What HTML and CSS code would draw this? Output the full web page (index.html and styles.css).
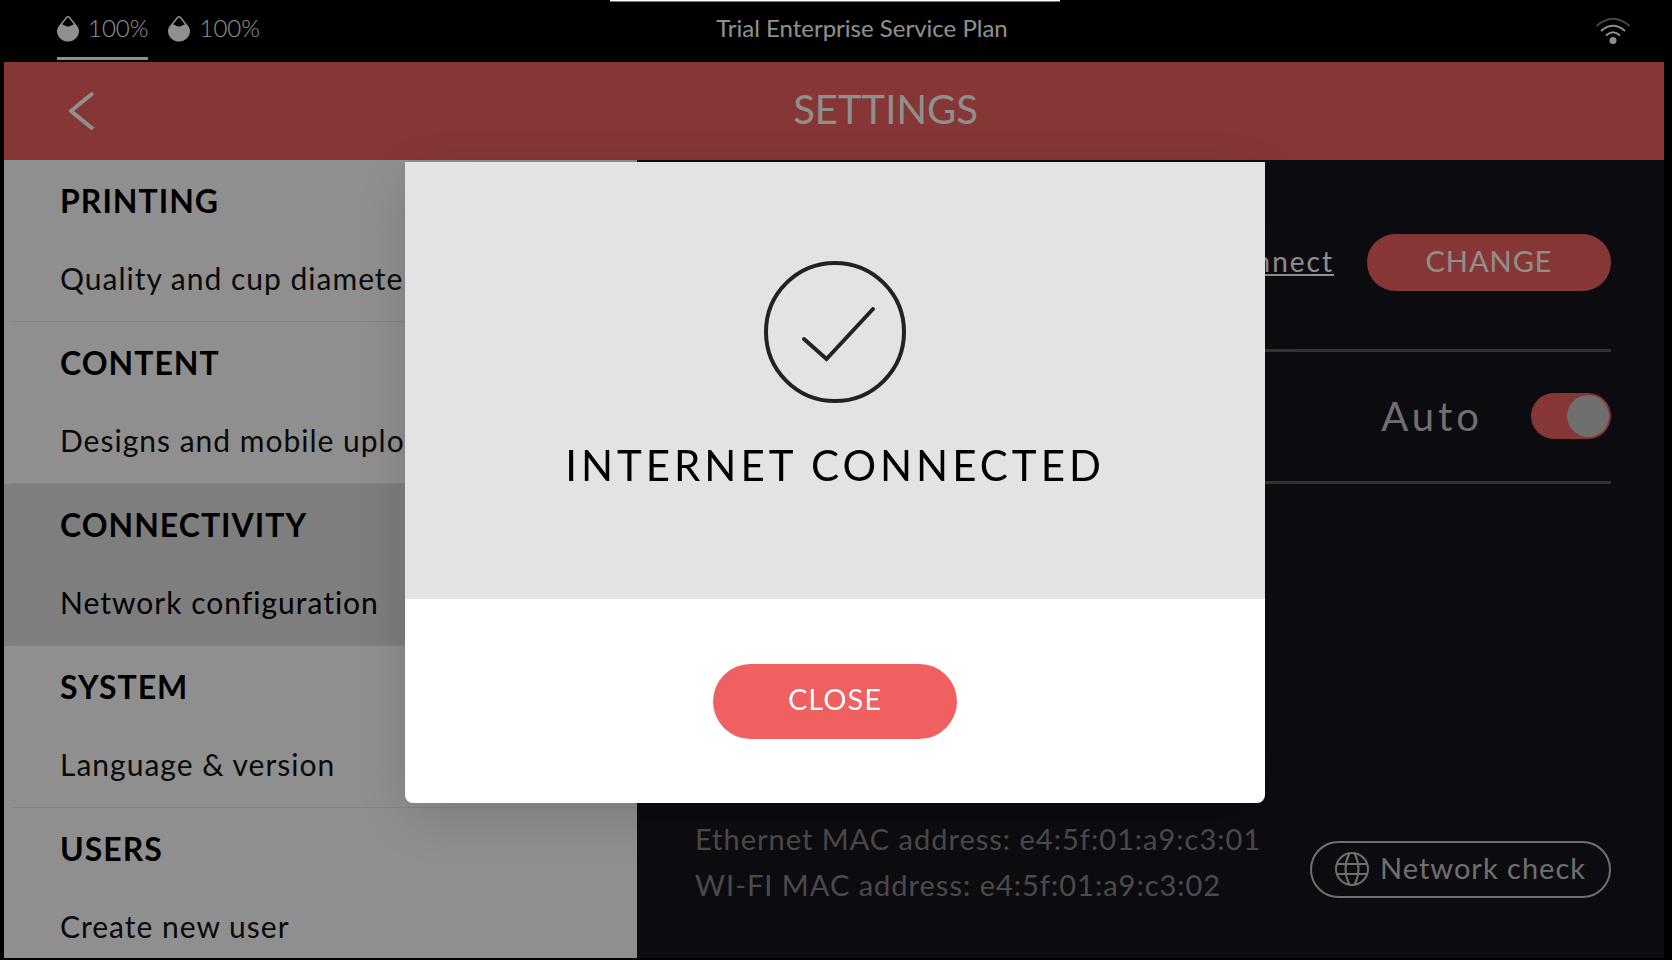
FILE: index.html
```html
<!DOCTYPE html>
<html lang="en">
<head>
  <meta charset="UTF-8" />
  <meta name="viewport" content="width=device-width, initial-scale=1.0" />
  <title>Settings</title>
  <link rel="stylesheet" href="styles.css">
</head>
<body>
  <div class="screen">
    <div class="status">
      <div class="inks">
        <div class="ink selected">
          <svg width="22" height="27" viewBox="0 0 22 27">
            <path d="M4 9.500 L9.500 2.500 Q11 1 12.500 2.500 L18 9.500" fill="none" stroke="#fff" stroke-width="1.500"/>
            <path d="M3.500 9 C6 8.500 8 11.500 11 11.500 S16 8.500 18.500 9 C21 11.500 22 13.500 22 16 a11 10.500 0 0 1 -22 0 C0 13.500 1 11.500 3.500 9z" fill="#fff"/>
          </svg>
          <span>100%</span>
        </div>
        <div class="ink">
          <svg width="22" height="27" viewBox="0 0 22 27">
            <path d="M4 9.500 L9.500 2.500 Q11 1 12.500 2.500 L18 9.500" fill="none" stroke="#fff" stroke-width="1.500"/>
            <path d="M3.500 9 C6 8.500 8 11.500 11 11.500 S16 8.500 18.500 9 C21 11.500 22 13.500 22 16 a11 10.500 0 0 1 -22 0 C0 13.500 1 11.500 3.500 9z" fill="#fff"/>
          </svg>
          <span>100%</span>
        </div>
      </div>
      <div class="plan">Trial Enterprise Service Plan</div>
      <div class="wifi">
        <svg width="36" height="28" viewBox="0 0 36 28" fill="none" stroke="#fff" stroke-width="2">
          <path d="M1.500 9 Q18 -5.500 34.500 9" stroke-opacity=".5"/>
          <path d="M6 14 Q18 3.500 30 14"/>
          <path d="M11 18.500 Q18 12 25 18.500"/>
          <circle cx="18" cy="23.500" r="3.500" fill="#fff" stroke="none"/>
        </svg>
      </div>
    </div>

    <div class="header">
      <button class="back" type="button" aria-label="Back">
        <svg width="26" height="40" viewBox="0 0 26 40"><path d="M24 2 L2 20 L24 38" fill="none" stroke="#fff" stroke-width="4"/></svg>
      </button>
      <h1>SETTINGS</h1>
    </div>

    <div class="content">
      <ul class="menu">
        <li><a href="#"><strong>PRINTING</strong><span>Quality and cup diameter</span></a></li>
        <li><a href="#"><strong>CONTENT</strong><span>Designs and mobile upload</span></a></li>
        <li class="active"><a href="#"><strong>CONNECTIVITY</strong><span>Network configuration</span></a></li>
        <li><a href="#"><strong>SYSTEM</strong><span>Language &amp; version</span></a></li>
        <li><a href="#"><strong>USERS</strong><span>Create new user</span></a></li>
      </ul>

      <div class="panel">
        <div class="row network">
          <a class="disconnect" href="#">Disconnect</a>
          <button class="btn" type="button">CHANGE</button>
        </div>
        <div class="row auto">
          <label for="auto">Auto</label>
          <input class="toggle" type="checkbox" id="auto" checked>
        </div>
        <div class="bottom">
          <div class="mac">
            <p>Ethernet MAC address: e4:5f:01:a9:c3:01</p>
            <p>WI-FI MAC address: e4:5f:01:a9:c3:02</p>
          </div>
          <button class="check" type="button">
            <svg width="34" height="34" viewBox="0 0 34 34" fill="none" stroke="#c6c6c6" stroke-width="2">
              <circle cx="17" cy="17" r="16"/>
              <path d="M14.500 1 Q6.500 17 14.500 33 M19.500 1 Q27.500 17 19.500 33 M2 12h30 M2 22h30"/>
            </svg>
            <span>Network check</span>
          </button>
        </div>
      </div>
    </div>
  </div>

  <div class="backdrop">
    <div class="modal" role="dialog" aria-labelledby="modal-title">
      <div class="modal-body">
        <svg width="142" height="142" viewBox="0 0 142 142" fill="none" stroke="#222" stroke-width="4">
          <circle cx="71" cy="71" r="69"/>
          <path d="M40 78 L62.500 98 L109 48" stroke-linecap="round"/>
        </svg>
        <h2 id="modal-title">INTERNET CONNECTED</h2>
      </div>
      <div class="modal-footer">
        <button class="btn close" type="button">CLOSE</button>
      </div>
    </div>
  </div>
  <div class="handle"></div>
</body>
</html>
```
FILE: styles.css
```css
* {
  box-sizing: border-box;
}

body {
  margin: 0;
  font-family: Lato, "Open Sans", sans-serif;
  font-size: 30px;
  line-height: 36px;
  letter-spacing: 1px;
  background: #000;
  color: #fff;
}

button {
  font: inherit;
  letter-spacing: inherit;
  cursor: pointer;
}

.screen {
  display: flex;
  flex-direction: column;
  height: 100vh;
  padding: 0 8px 2px 4px;
  overflow: hidden;
}

/* status bar */
.status {
  display: flex;
  flex: none;
  height: 62px;
  padding-left: 53px;
  letter-spacing: 0;
}

.inks {
  display: flex;
  gap: 20px;
}

.ink {
  display: flex;
  align-items: center;
  gap: 9px;
  height: 60px;
  padding-bottom: 1px;
  font-size: 24px;
  font-weight: 300;
  border-bottom: 3px solid transparent;
}

.ink.selected {
  border-color: #fff;
}

.plan {
  flex: 1;
  padding-top: 10px;
  font-size: 24px;
  text-align: center;
}

.wifi {
  width: 200px;
  padding: 17px 33px 0 0;
  line-height: 0;
  text-align: right;
}

/* title bar */
.header {
  display: flex;
  flex: none;
  align-items: center;
  height: 98px;
  padding-bottom: 4px;
  background: #f06060;
}

.back {
  width: 103px;
  padding: 4px 12px 0 64px;
  background: none;
  border: 0;
  line-height: 0;
}

.header h1 {
  flex: 1;
  margin: 0;
  font-size: 40px;
  font-weight: 400;
  line-height: 48px;
  letter-spacing: 0;
  text-align: center;
}

.content {
  display: flex;
  flex: 1;
  min-height: 0;
}

/* left menu */
.menu {
  flex: none;
  width: 633px;
  max-width: 40%;
  margin: 0;
  padding: 0;
  overflow: hidden;
  background: #fff;
  list-style: none;
}

.menu .active {
  background: #e0e0e0;
}

.menu a {
  display: block;
  margin-left: 8px;
  padding: 21px 0 25px 48px;
  border-bottom: 1px solid #ececec;
  color: #111;
  text-decoration: none;
  white-space: nowrap;
}

.menu strong {
  display: block;
  margin-bottom: 39px;
  color: #000;
  font-size: 32px;
  line-height: 40px;
}

.menu span {
  display: block;
}

.menu .active span {
  color: #000;
}

/* right panel */
.panel {
  display: flex;
  flex: 1;
  flex-direction: column;
  padding: 0 53px 50px 58px;
  background: #17151d;
}

.row {
  display: flex;
  align-items: center;
  justify-content: flex-end;
  border-bottom: 3px solid #5c5c5c;
}

.network {
  gap: 33px;
  padding: 74px 0 58px;
}

.disconnect {
  padding-bottom: 4px;
  color: #fff;
  font-size: 28px;
  letter-spacing: 2px;
}

.btn {
  width: 244px;
  height: 57px;
  padding: 0 0 4px;
  border: 0;
  border-radius: 29px;
  background: #f06060;
  color: #fff;
  font-size: 29px;
}

.auto {
  gap: 48px;
  height: 132px;
  padding-bottom: 2px;
  color: #c6c6c6;
  font-size: 40px;
  letter-spacing: 4px;
}

.toggle {
  width: 80px;
  height: 46px;
  margin: 0;
  padding: 2px;
  appearance: none;
  border-radius: 23px;
  background: #5c5c5c;
}

.toggle::before {
  content: "";
  display: block;
  width: 42px;
  height: 42px;
  border-radius: 50%;
  background: #c6c6c6;
}

.toggle:checked {
  background: #f06060;
}

.toggle:checked::before {
  margin-left: auto;
}

.bottom {
  display: flex;
  align-items: center;
  justify-content: space-between;
  margin-top: auto;
}

.mac {
  color: #858585;
  font-size: 29px;
  line-height: 46px;
  white-space: nowrap;
}

.mac p {
  margin: 0;
}

.check {
  display: flex;
  align-items: center;
  justify-content: center;
  gap: 11px;
  width: 301px;
  height: 57px;
  margin-top: 14px;
  padding: 0;
  border: 2px solid #c6c6c6;
  border-radius: 29px;
  background: none;
  color: #c6c6c6;
  font-size: 29px;
  white-space: nowrap;
}

.check span {
  padding-bottom: 2px;
}

/* dialog */
.backdrop {
  position: fixed;
  inset: 0;
  display: flex;
  align-items: center;
  justify-content: center;
  padding: 4px 2px 0 0;
  background: rgba(0, 0, 0, 0.44);
}

.modal {
  width: 860px;
  overflow: hidden;
  border-radius: 0 0 8px 8px;
  background: #fff;
  box-shadow: 0 16px 60px rgba(0, 0, 0, 0.15);
  color: #000;
  text-align: center;
}

.modal-body {
  padding: 99px 0 110px;
  background: #e3e3e3;
  line-height: 0;
}

.modal h2 {
  margin: 38px 0 0;
  font-size: 42px;
  font-weight: 400;
  line-height: 48px;
  letter-spacing: 4px;
}

.modal-footer {
  padding: 65px 0 64px;
  line-height: 0;
}

.close {
  height: 75px;
  border-radius: 38px;
}

.handle {
  position: fixed;
  top: 0;
  left: 50%;
  width: 450px;
  height: 2px;
  margin-left: -226px;
  background: #fff;
  border-bottom: 1px solid #777;
}
```
